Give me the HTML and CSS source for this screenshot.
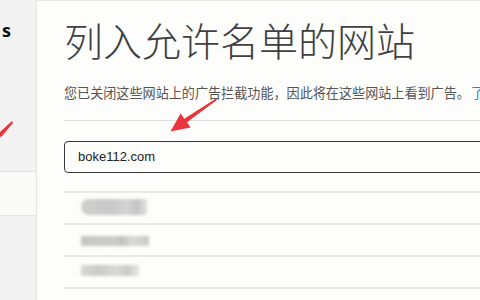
FILE: index.html
```html
<!DOCTYPE html>
<html lang="zh-CN">
<head>
<meta charset="utf-8">
<link rel="stylesheet" href="styles.css">
</head>
<body>
<div class="page">
  <aside class="side">
    <div class="side-panel side-top"><span class="side-title">s</span></div>
    <div class="side-gap"></div>
    <div class="side-panel side-bottom"></div>
  </aside>
  <div class="main">
    <div class="topbar"></div>
    <section class="card">
      <h1 class="title">列入允许名单的网站</h1>
      <p class="desc">您已关闭这些网站上的广告拦截功能，因此将在这些网站上看到广告。<a class="link" href="#">了解详情</a></p>
      <hr class="sep">
      <div class="input">boke112.com</div>
      <ul class="list">
        <li class="row"><span class="blob b1"></span></li>
        <li class="row"><span class="blob b2"></span></li>
        <li class="row"><span class="blob b3"></span></li>
        <li class="row"></li>
      </ul>
    </section>
  </div>
</div>
<svg class="arrows" width="480" height="300" viewBox="0 0 480 300">
  <polygon points="216,98.5 217,100 187,122.3 190.6,127.4 170.5,131.5 180.6,113.6 184.3,118.7" fill="#e8363c"/>
  <polygon points="12,121 13,123 2,136 0,137 0,132" fill="#e8363c"/>
</svg>
</body>
</html>
```
FILE: styles.css
```css
html, body {
  margin: 0;
  padding: 0;
  width: 480px;
  height: 300px;
  overflow: hidden;
  background: #fbfbfa;
}

.page {
  display: flex;
  width: 480px;
  height: 300px;
  overflow: hidden;
}

.side {
  width: 36px;
  flex: none;
  display: flex;
  flex-direction: column;
  border-right: 1px solid #e4e4e4;
}

.side-panel {
  background: #f3f3f3;
}

.side-top {
  height: 171px;
  border-bottom: 1px solid #e2e2e2;
}

.side-title {
  display: block;
  padding: 19px 0 0 2px;
  font-family: "Open Sans", "Noto Sans", sans-serif;
  font-weight: 700;
  font-size: 18px;
  line-height: 22px;
  color: #111;
}

.side-gap {
  height: 43px;
  background: #fafaf9;
}

.side-bottom {
  flex: 1;
  border-top: 1px solid #e2e2e2;
}

.main {
  flex: none;
  width: 700px;
  display: flex;
  flex-direction: column;
}

.topbar {
  height: 8px;
  background: #f1f1f1;
  border-bottom: 1px solid #e9e9e9;
}

.card {
  flex: 1;
  background: #fdfdfc;
  padding: 0 0 0 27px;
}

.title {
  margin: 0;
  padding-top: 18px;
  font-family: "Noto Sans CJK SC", sans-serif;
  font-weight: 300;
  font-size: 39px;
  line-height: 40px;
  color: #404040;
}

.desc {
  margin: 25px 0 0 0;
  font-family: "Noto Sans CJK SC", sans-serif;
  font-size: 13.1px;
  line-height: 18px;
  color: #555;
  white-space: nowrap;
}

.link {
  margin-left: 1px;
  color: #2b84d0;
  text-decoration: none;
}

.sep {
  margin: 18px 0 0 0;
  border: 0;
  height: 1px;
  background: #dedede;
}

.input {
  margin-top: 20px;
  height: 30px;
  border: 1.5px solid #3a3a3a;
  border-radius: 4px;
  padding-left: 13px;
  font-family: "Liberation Sans", Arial, sans-serif;
  font-size: 13px;
  line-height: 30px;
  color: #222;
}

.list {
  list-style: none;
  margin: 18px 0 0 0;
  padding: 0;
}

.row {
  height: 30px;
  border-top: 2px solid #e8e8e7;
}

.blob {
  display: block;
  margin-left: 17px;
  filter: blur(1.6px);
}

.b1 {
  margin-top: 6px;
  width: 66px;
  height: 16px;
  border-radius: 8px 2px 2px 8px;
  background: linear-gradient(90deg, #cfcfcf 0%, #c8c8c8 45%, #d4d4d4 70%, #c4c4c4 85%, #e2e2e2 100%);
}

.b2 {
  margin-top: 11px;
  width: 68px;
  height: 10px;
  background: linear-gradient(90deg, #c6c6c6 0%, #cbcbcb 50%, #c1c1c1 60%, #d9d9d9 75%, #cacaca 100%);
}

.b3 {
  margin-top: 8px;
  width: 58px;
  height: 11px;
  background: linear-gradient(90deg, #d8d8d8 0%, #cacaca 30%, #d9d9d9 60%, #cacaca 80%, #e6e6e6 100%);
}

.arrows {
  position: absolute;
  left: 0;
  top: 0;
  pointer-events: none;
}
```
